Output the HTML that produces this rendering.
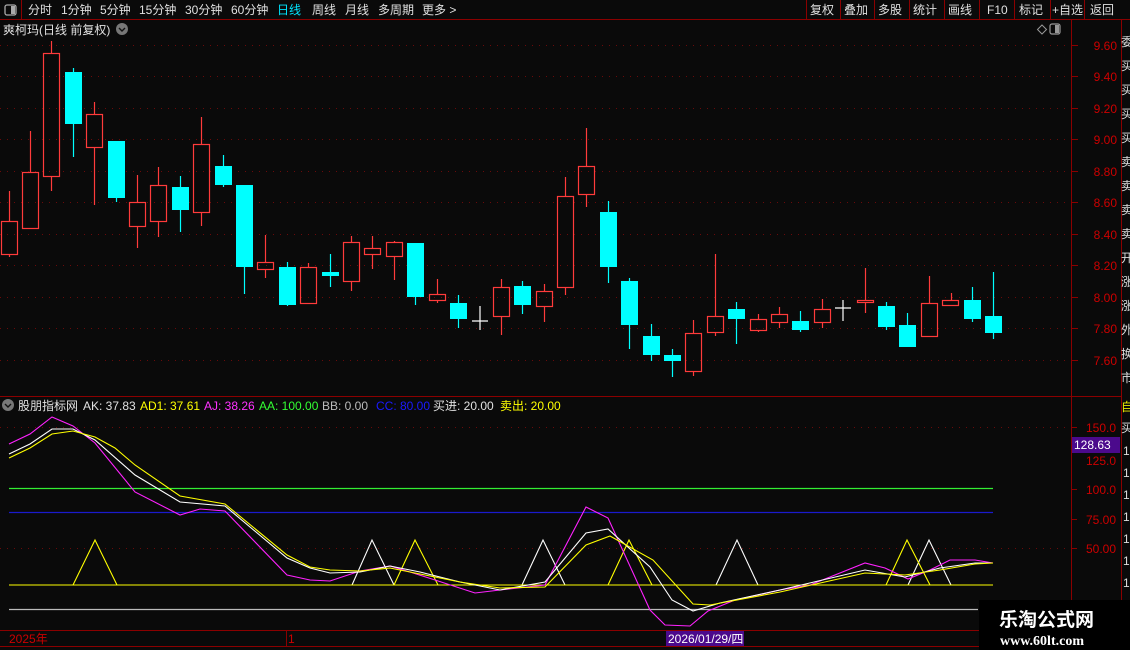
<!DOCTYPE html>
<html><head><meta charset="utf-8"><style>
html,body{margin:0;padding:0;background:#0a0a0a;width:1130px;height:650px;overflow:hidden;font-family:"Liberation Sans","Noto Sans CJK SC",sans-serif;}
.t{position:absolute;white-space:nowrap;font-size:12px;line-height:14px;}
</style></head><body>
<div style="position:relative;width:1130px;height:650px;">
<svg width="1130" height="650" style="position:absolute;left:0;top:0" font-family="Liberation Sans, Noto Sans CJK SC, sans-serif">
<!-- toolbar -->
<rect x="0" y="0" width="1130" height="19" fill="#0a0a0a"/>
<line x1="0" y1="19.5" x2="1130" y2="19.5" stroke="#8b0000"/>
<line x1="21.5" y1="0" x2="21.5" y2="19" stroke="#8b0000"/>
<rect x="5" y="5" width="11" height="10" rx="2" fill="none" stroke="#aaa" stroke-width="1.3"/>
<rect x="11" y="6" width="4" height="8" fill="#aaa"/>
<g stroke="#8b0000">
<line x1="806.5" y1="0" x2="806.5" y2="19"/><line x1="840.5" y1="0" x2="840.5" y2="19"/><line x1="874.5" y1="0" x2="874.5" y2="19"/><line x1="909.5" y1="0" x2="909.5" y2="19"/><line x1="944.5" y1="0" x2="944.5" y2="19"/><line x1="979.5" y1="0" x2="979.5" y2="19"/><line x1="1014.5" y1="0" x2="1014.5" y2="19"/><line x1="1050.5" y1="0" x2="1050.5" y2="19"/><line x1="1084.5" y1="0" x2="1084.5" y2="19"/>
</g>
<g font-size="12" fill="#e0e0e0">
<text x="28" y="14">分时</text><text x="61" y="14">1分钟</text><text x="100" y="14">5分钟</text><text x="139" y="14">15分钟</text><text x="185" y="14">30分钟</text><text x="231" y="14">60分钟</text>
<text x="277" y="14" fill="#00e5ff">日线</text><text x="312" y="14">周线</text><text x="345" y="14">月线</text><text x="378" y="14">多周期</text><text x="422" y="14">更多 &gt;</text>
<text x="810" y="14">复权</text><text x="844" y="14">叠加</text><text x="878" y="14">多股</text><text x="913" y="14">统计</text><text x="948" y="14">画线</text><text x="987" y="14">F10</text><text x="1019" y="14">标记</text><text x="1052" y="14">+自选</text><text x="1090" y="14">返回</text>
<text x="3" y="34">爽柯玛(日线 前复权)</text>
</g>
<circle cx="122" cy="29" r="6" fill="#777"/><path d="M119 28l3 3 3-3" stroke="#111" stroke-width="1.4" fill="none"/>
<path d="M1042 25l4.5 4.5-4.5 4.5-4.5-4.5z" fill="none" stroke="#999"/>
<rect x="1050" y="24" width="10" height="10" rx="2" fill="none" stroke="#999" stroke-width="1.2"/><rect x="1055" y="25" width="4" height="8" fill="#999"/>
<!-- axes -->
<line x1="1071.5" y1="19" x2="1071.5" y2="646" stroke="#8b0000"/>
<line x1="1121.5" y1="19" x2="1121.5" y2="646" stroke="#8b0000"/>
<line x1="0" y1="396.5" x2="1121" y2="396.5" stroke="#8b0000"/>
<line x1="0" y1="630.5" x2="1130" y2="630.5" stroke="#8b0000"/>
<line x1="0" y1="646.5" x2="1130" y2="646.5" stroke="#8b0000"/>
<line x1="286.5" y1="630" x2="286.5" y2="646" stroke="#8b0000"/>
<!-- grid -->
<g stroke="#6a0a0a" stroke-dasharray="1 6">
<line x1="0" y1="45.5" x2="1070" y2="45.5"/><line x1="0" y1="76.5" x2="1070" y2="76.5"/><line x1="0" y1="108.5" x2="1070" y2="108.5"/><line x1="0" y1="139.5" x2="1070" y2="139.5"/><line x1="0" y1="171.5" x2="1070" y2="171.5"/><line x1="0" y1="202.5" x2="1070" y2="202.5"/><line x1="0" y1="234.5" x2="1070" y2="234.5"/><line x1="0" y1="265.5" x2="1070" y2="265.5"/><line x1="0" y1="297.5" x2="1070" y2="297.5"/><line x1="0" y1="328.5" x2="1070" y2="328.5"/><line x1="0" y1="360.5" x2="1070" y2="360.5"/>
<line x1="0" y1="427.5" x2="1070" y2="427.5"/><line x1="0" y1="548.5" x2="1070" y2="548.5"/>
</g>
<g stroke="#8b0000">
<line x1="1071" y1="45.5" x2="1078" y2="45.5"/><line x1="1071" y1="76.5" x2="1078" y2="76.5"/><line x1="1071" y1="108.5" x2="1078" y2="108.5"/><line x1="1071" y1="139.5" x2="1078" y2="139.5"/><line x1="1071" y1="171.5" x2="1078" y2="171.5"/><line x1="1071" y1="202.5" x2="1078" y2="202.5"/><line x1="1071" y1="234.5" x2="1078" y2="234.5"/><line x1="1071" y1="265.5" x2="1078" y2="265.5"/><line x1="1071" y1="297.5" x2="1078" y2="297.5"/><line x1="1071" y1="328.5" x2="1078" y2="328.5"/><line x1="1071" y1="360.5" x2="1078" y2="360.5"/>
<line x1="1071" y1="427.5" x2="1077" y2="427.5"/><line x1="1071" y1="489.5" x2="1077" y2="489.5"/><line x1="1071" y1="519.5" x2="1077" y2="519.5"/><line x1="1071" y1="548.5" x2="1077" y2="548.5"/>
</g>
<g font-size="12" fill="#cc0000" text-anchor="end">
<text x="1117" y="50">9.60</text><text x="1117" y="81">9.40</text><text x="1117" y="113">9.20</text><text x="1117" y="144">9.00</text><text x="1117" y="176">8.80</text><text x="1117" y="207">8.60</text><text x="1117" y="239">8.40</text><text x="1117" y="270">8.20</text><text x="1117" y="302">8.00</text><text x="1117" y="333">7.80</text><text x="1117" y="365">7.60</text>
<text x="1116" y="432">150.0</text><text x="1116" y="465">125.0</text><text x="1116" y="494">100.0</text><text x="1116" y="524">75.00</text><text x="1116" y="553">50.00</text>
</g>
<rect x="1072" y="437" width="48" height="16" fill="#4b0a8c"/>
<text x="1074" y="449" font-size="12" fill="#fff">128.63</text>
<!-- right column chars -->
<g font-size="12" fill="#ddd">
<text x="1121" y="46">委</text><text x="1121" y="70">买</text><text x="1121" y="94">买</text><text x="1121" y="118">买</text><text x="1121" y="142">买</text><text x="1121" y="166">卖</text><text x="1121" y="190">卖</text><text x="1121" y="214">卖</text><text x="1121" y="238">卖</text><text x="1121" y="262">开</text><text x="1121" y="286">涨</text><text x="1121" y="310">涨</text><text x="1121" y="334">外</text><text x="1121" y="358">换</text><text x="1121" y="382">市</text>
<text x="1121" y="432">买</text><text x="1123" y="455">1</text><text x="1123" y="477">1</text><text x="1123" y="499">1</text><text x="1123" y="521">1</text><text x="1123" y="543">1</text><text x="1123" y="565">1</text><text x="1123" y="587">1</text>
</g>
<text x="1121" y="411" font-size="12" fill="#e8e800">自</text>
<!-- candles -->
<g stroke="#ff3b3b" fill="none" stroke-width="1.2">
<path d="M9.5 191V221M9.5 254V257M30.5 131V172M51.5 41V53M51.5 176V191M94.5 102V114M94.5 147V205M137.5 175V202M137.5 226V248M158.5 167V185M158.5 221V237M201.5 117V144M201.5 212V226M265.5 235V262M265.5 269V278M308.5 263V267M351.5 236V242M351.5 281V291M372.5 236V248M372.5 254V269M394.5 241V242M394.5 256V280M437.5 279V294M437.5 300V303M501.5 279V287M501.5 316V335M544.5 284V291M544.5 306V322M565.5 177V196M565.5 287V295M586.5 128V166M586.5 194V207M693.5 320V333M693.5 371V376M715.5 254V316M715.5 332V336M758.5 314V319M758.5 330V332M779.5 307V314M779.5 322V328M822.5 299V309M822.5 322V328M865.5 268V300M865.5 302V313M929.5 276V303M951.5 293V300"/>
<rect x="1.5" y="221.5" width="16" height="33"/><rect x="22.5" y="172.5" width="16" height="56"/><rect x="43.5" y="53.5" width="16" height="123"/><rect x="86.5" y="114.5" width="16" height="33"/><rect x="129.5" y="202.5" width="16" height="24"/><rect x="150.5" y="185.5" width="16" height="36"/><rect x="193.5" y="144.5" width="16" height="68"/><rect x="257.5" y="262.5" width="16" height="7"/><rect x="300.5" y="267.5" width="16" height="36"/><rect x="343.5" y="242.5" width="16" height="39"/><rect x="364.5" y="248.5" width="16" height="6"/><rect x="386.5" y="242.5" width="16" height="14"/><rect x="429.5" y="294.5" width="16" height="6"/><rect x="493.5" y="287.5" width="16" height="29"/><rect x="536.5" y="291.5" width="16" height="15"/><rect x="557.5" y="196.5" width="16" height="91"/><rect x="578.5" y="166.5" width="16" height="28"/><rect x="685.5" y="333.5" width="16" height="38"/><rect x="707.5" y="316.5" width="16" height="16"/><rect x="750.5" y="319.5" width="16" height="11"/><rect x="771.5" y="314.5" width="16" height="8"/><rect x="814.5" y="309.5" width="16" height="13"/><rect x="857.5" y="300.5" width="16" height="2"/><rect x="921.5" y="303.5" width="16" height="33"/><rect x="942.5" y="300.5" width="16" height="5"/>
</g>
<g stroke="#00ffff" stroke-width="1.2">
<path d="M73.5 68V157M116.5 141V202M180.5 176V232M223.5 155V187M244.5 185V294M287.5 262V306M330.5 254V287M415.5 243V305M458.5 295V328M522.5 281V314M608.5 201V283M629.5 278V349M651.5 324V361M672.5 349V377M736.5 302V344M800.5 311V332M886.5 302V330M907.5 313V347M972.5 287V322M993.5 272V339"/>
</g>
<g fill="#00ffff">
<rect x="65" y="72" width="17" height="52"/><rect x="108" y="141" width="17" height="57"/><rect x="172" y="187" width="17" height="23"/><rect x="215" y="166" width="17" height="19"/><rect x="236" y="185" width="17" height="82"/><rect x="279" y="267" width="17" height="38"/><rect x="322" y="272" width="17" height="4"/><rect x="407" y="243" width="17" height="54"/><rect x="450" y="303" width="17" height="16"/><rect x="514" y="286" width="17" height="19"/><rect x="600" y="212" width="17" height="55"/><rect x="621" y="281" width="17" height="44"/><rect x="643" y="336" width="17" height="19"/><rect x="664" y="355" width="17" height="6"/><rect x="728" y="309" width="17" height="10"/><rect x="792" y="321" width="17" height="9"/><rect x="878" y="306" width="17" height="21"/><rect x="899" y="325" width="17" height="22"/><rect x="964" y="300" width="17" height="19"/><rect x="985" y="316" width="17" height="17"/>
</g>
<g stroke="#fff" stroke-width="1.2"><path d="M480 306V330M472 321H488M843 300V321M835 308H851"/></g>
<!-- indicator -->
<circle cx="8" cy="405" r="6" fill="#777"/><path d="M5 404l3 3 3-3" stroke="#111" stroke-width="1.4" fill="none"/>
<g font-size="12">
<text x="18" y="410" fill="#e0e0e0">股朋指标网</text>
<text x="83" y="410" fill="#e0e0e0">AK: 37.83</text>
<text x="140" y="410" fill="#ffff00">AD1: 37.61</text>
<text x="204" y="410" fill="#ff33ff">AJ: 38.26</text>
<text x="259" y="410" fill="#33ff33">AA: 100.00</text>
<text x="322" y="410" fill="#bbbbbb">BB: 0.00</text>
<text x="376" y="410" fill="#1a1aff">CC: 80.00</text>
<text x="433" y="410" fill="#e0e0e0">买进: 20.00</text>
<text x="500" y="410" fill="#ffff00">卖出: 20.00</text>
</g>
<line x1="9" y1="488.5" x2="993" y2="488.5" stroke="#33ee33" stroke-width="1.2"/>
<line x1="9" y1="512.5" x2="993" y2="512.5" stroke="#1a1acc" stroke-width="1.2"/>
<line x1="9" y1="609.5" x2="978" y2="609.5" stroke="#bbb" stroke-width="1.2"/>
<g fill="none" stroke-width="1.1">
<path stroke="#fff" d="M352 585L372 540L394 585M522 585L543 540L565 585M716 585L737 540L758 585M908 585L929 540L951 585"/>
<path stroke="#ffff00" d="M73 585L95 540L117 585M394 585L415 540L438 585M608 585L629 540L652 585M886 585L907 540L930 585"/>
<line x1="9" y1="585" x2="993" y2="585" stroke="#ffff00"/>
<polyline stroke="#ff22ff" points="9,444 30,434 52,417 73,426 95,443 135,492 180,515 200,509 225,511 287,575 310,580 330,581 360,571 390,566 410,572 435,580 475,593 500,590 545,585 586,507 608,518 650,610 665,625 690,626 708,611 735,600 780,590 810,585 865,563 885,568 908,579 930,570 950,560 975,560 993,563"/>
<polyline stroke="#ffffff" points="9,454 30,444 52,429 73,429 95,440 135,475 180,502 225,506 287,558 310,568 330,573 360,572 390,566 420,572 460,582 500,590 545,582 586,533 608,529 650,567 672,600 693,611 720,603 780,590 865,570 905,577 940,568 975,563 993,563"/>
<polyline stroke="#ffff00" points="9,458 30,448 52,434 73,431 95,437 115,448 135,465 180,496 225,504 287,555 310,567 330,570 360,571 390,568 420,574 460,582 500,588 545,587 586,545 610,536 653,560 693,604 710,605 780,592 865,573 905,575 940,570 975,564 993,563"/>
</g>
<!-- x axis -->
<text x="9" y="643" font-size="12" fill="#cc0000">2025年</text>
<text x="288" y="643" font-size="12" fill="#cc0000">1</text>
<rect x="666" y="631" width="78" height="15" fill="#4b0a8c"/>
<text x="668" y="643" font-size="12" fill="#fff">2026/01/29/四</text>
<!-- watermark -->
<rect x="979" y="600" width="151" height="50" fill="#000"/>
<text x="999" y="626" font-size="19" font-weight="bold" fill="#fff" font-family="Noto Sans CJK SC, sans-serif">乐淘公式网</text>
<text x="1000" y="645" font-size="14" font-weight="bold" fill="#fff" font-family="Liberation Serif, serif">www.60lt.com</text>
</svg>
</div>
</body></html>
